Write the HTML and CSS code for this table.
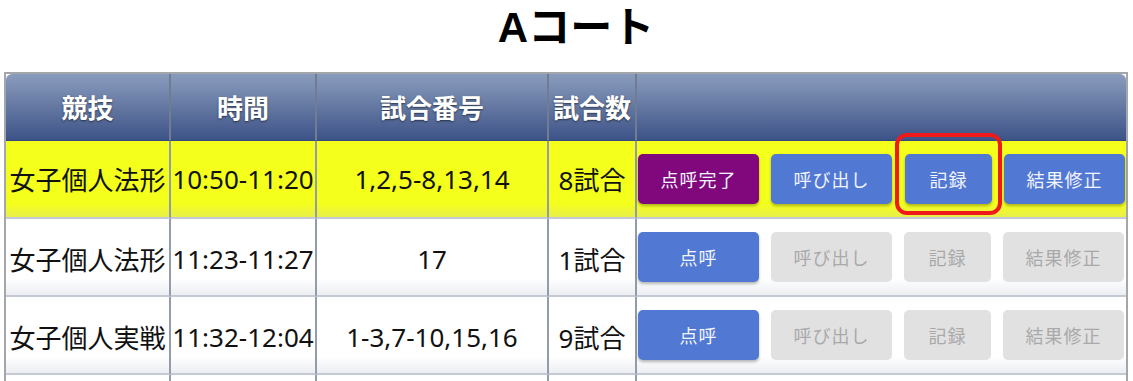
FILE: index.html
```html
<!DOCTYPE html>
<html lang="ja">
<head>
<meta charset="utf-8">
<title>Aコート</title>
<link rel="stylesheet" href="styles.css">
</head>
<body>
<h1 class="court-title">Aコート</h1>
<table class="schedule">
  <colgroup>
    <col class="c-event">
    <col class="c-time">
    <col class="c-match">
    <col class="c-count">
    <col class="c-actions">
  </colgroup>
  <thead>
    <tr>
      <th>競技</th>
      <th>時間</th>
      <th>試合番号</th>
      <th>試合数</th>
      <th></th>
    </tr>
  </thead>
  <tbody>
    <tr class="current">
      <td>女子個人法形</td>
      <td>10:50-11:20</td>
      <td>1,2,5-8,13,14</td>
      <td>8試合</td>
      <td class="actions">
        <div class="btns">
          <button class="btn wide done">点呼完了</button>
          <button class="btn wide">呼び出し</button>
          <span class="marked"><button class="btn narrow">記録</button><span class="ring"></span></span>
          <button class="btn wide">結果修正</button>
        </div>
      </td>
    </tr>
    <tr class="shifted">
      <td>女子個人法形</td>
      <td>11:23-11:27</td>
      <td>17</td>
      <td>1試合</td>
      <td class="actions">
        <div class="btns">
          <button class="btn wide">点呼</button>
          <button class="btn wide off">呼び出し</button>
          <button class="btn narrow off">記録</button>
          <button class="btn wide off">結果修正</button>
        </div>
      </td>
    </tr>
    <tr class="shifted">
      <td>女子個人実戦</td>
      <td>11:32-12:04</td>
      <td>1-3,7-10,15,16</td>
      <td>9試合</td>
      <td class="actions">
        <div class="btns">
          <button class="btn wide">点呼</button>
          <button class="btn wide off">呼び出し</button>
          <button class="btn narrow off">記録</button>
          <button class="btn wide off">結果修正</button>
        </div>
      </td>
    </tr>
    <tr class="spacer">
      <td></td>
      <td></td>
      <td></td>
      <td></td>
      <td></td>
    </tr>
  </tbody>
</table>
</body>
</html>
```

FILE: styles.css
```css
html, body {
  margin: 0;
  padding: 0;
  background: #ffffff;
}

body {
  padding: 0 5px 0 4px;
  font-family: "Noto Sans", "Noto Sans CJK JP", sans-serif;
  color: #111;
  overflow: hidden;
}

.court-title {
  margin: 0;
  height: 72px;
  line-height: 56px;
  text-align: center;
  padding-left: 20px;
  font-family: "Liberation Sans", "Noto Sans CJK JP", sans-serif;
  font-weight: bold;
  font-size: 42px;
  color: #000;
}

.schedule {
  width: 1124px;
  table-layout: fixed;
  border-collapse: separate;
  border-spacing: 0;
  border: 2px solid #a3a6ab;
  border-bottom: none;
}

.c-event { width: 165px; }
.c-time { width: 146px; }
.c-match { width: 232px; }
.c-count { width: 88px; }
.c-actions { width: 489px; }

.schedule th {
  height: 66px;
  padding: 0;
  background: linear-gradient(#8a9cbd, #3d5387);
  color: #fff;
  font-size: 26px;
  font-weight: bold;
  text-shadow: 0 1px 2px rgba(0, 0, 0, 0.55);
  border-right: 2px solid #6f7c92;
  border-bottom: 1px solid #34497c;
  white-space: nowrap;
}

.schedule th:first-child { border-top-left-radius: 6px; }
.schedule th:last-child { border-right: none; border-top-right-radius: 6px; }

.schedule td {
  height: 76px;
  padding: 0;
  text-align: center;
  font-size: 26px;
  white-space: nowrap;
  background: linear-gradient(#ffffff 78%, #eceef2);
  border-right: 2px solid #939cab;
  border-bottom: 2px solid #c3cad5;
}

.schedule td:last-child { border-right: none; }

.schedule tr.shifted td:not(.actions) {
  height: 73px;
  padding-top: 3px;
}

.schedule tr.current td {
  background: linear-gradient(#f4ff1c 82%, #e9ef4a);
}

.schedule td.actions { text-align: left; }

.btns {
  display: flex;
  align-items: center;
  gap: 12px;
  padding-left: 1px;
}

.btn {
  height: 50px;
  border: none;
  border-radius: 5px;
  padding: 0;
  background: #5178d2;
  color: #f3f5ff;
  font-family: "Noto Sans CJK JP", sans-serif;
  font-size: 18px;
  letter-spacing: 1px;
  box-shadow: 0 2px 3px rgba(0, 0, 0, 0.28);
}

.btn.wide { width: 121px; }
.btn.narrow { width: 87px; }
.btn.done { background: #80077c; }

.btn.off {
  background: #e1e1e1;
  color: #a9a9a9;
  box-shadow: none;
}

.marked {
  position: relative;
  display: flex;
  margin-left: 1px;
}

.ring {
  position: absolute;
  left: -10px;
  right: -10px;
  top: -21px;
  bottom: -11px;
  border: 4px solid #f01a1a;
  border-radius: 12px;
  pointer-events: none;
}
```
